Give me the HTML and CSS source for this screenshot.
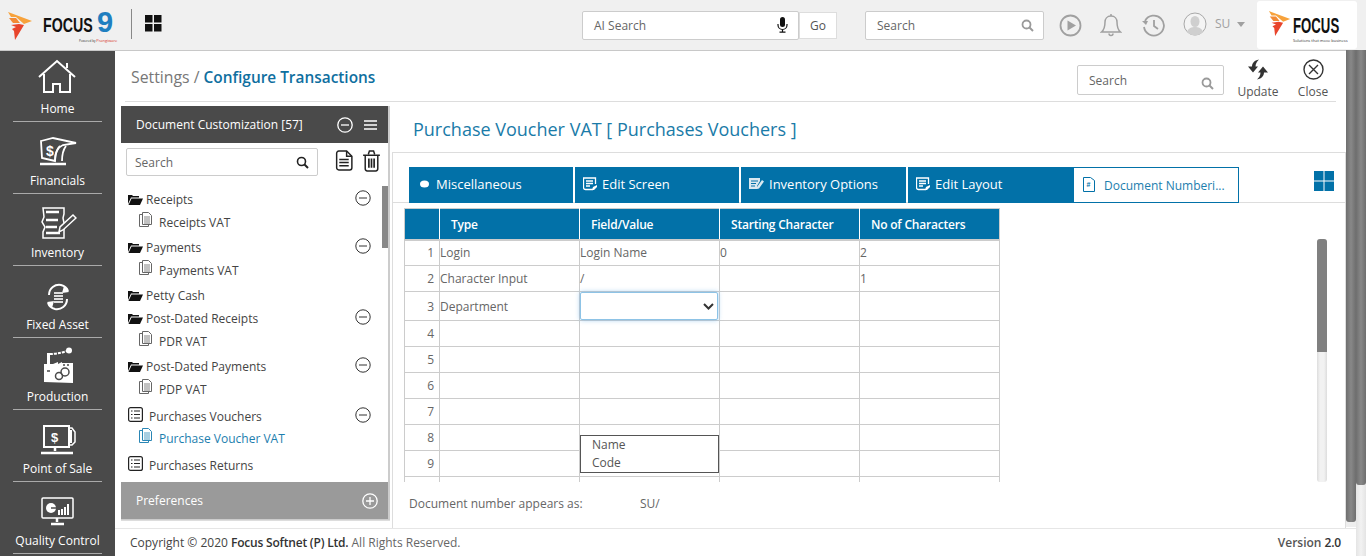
FILE: index.html
```html
<!DOCTYPE html>
<html lang="en">
<head>
    <meta charset="UTF-8">
    <title>Focus 9 - Configure Transactions</title>
    <link rel="stylesheet" href="styles.css">
</head>
<body>

<!-- Top bar -->
<header class="topbar">
    <div class="brand">
        <svg class="brand-mark" width="27" height="29" viewBox="0 0 27 29">
            <polygon points="1,0 25,9 17,12 9,5 4,5" fill="#f7a23b"/>
            <polygon points="2,6 9,6 13,11 6,11" fill="#f28a35"/>
            <polygon points="17,13 8,28 7,19 5,17 9,15 4,13 12,12" fill="#e8452c"/>
        </svg>
        <span class="brand-name">FOCUS</span>
        <span class="brand-nine">9</span>
        <span class="brand-by">Powered by <em>Prangiware</em></span>
    </div>
    <div class="brand-sep"></div>
    <svg class="apps" width="17" height="17" viewBox="0 0 17 17">
        <rect width="7.5" height="7.5"/><rect x="9" width="7.5" height="7.5"/>
        <rect y="9" width="7.5" height="7.5"/><rect x="9" y="9" width="7.5" height="7.5"/>
    </svg>

    <div class="top-tools">
        <div class="field ai-field">
            <span>AI Search</span>
            <svg width="11" height="16" viewBox="0 0 11 16" fill="#111"><rect x="3" y="0" width="5" height="10" rx="2.5"/><path d="M1 7v1a4.500 4.500 0 0 0 9 0V7M5.500 12.500V15M2.500 15.200h6" fill="none" stroke="#111" stroke-width="1.200"/></svg>
        </div>
        <div class="go-btn">Go</div>
        <div class="field top-search">
            <span>Search</span>
            <svg class="lens" width="13" height="13" viewBox="0 0 13 13"><circle cx="5.500" cy="5.500" r="4" fill="none" stroke="#9a9a9a" stroke-width="1.800"/><path d="M8.500 8.500l3.500 3.500" stroke="#9a9a9a" stroke-width="2"/></svg>
        </div>
        <svg class="tool" width="23" height="23" viewBox="0 0 23 23"><circle cx="11.500" cy="11.500" r="10" fill="none" stroke="#a0a0a0" stroke-width="1.800"/><polygon points="8.500,6.500 17,11.500 8.500,16.500" fill="#a0a0a0"/></svg>
        <svg class="tool tool-bell" width="22" height="24" viewBox="0 0 22 24" fill="none" stroke="#a0a0a0" stroke-width="1.500"><path d="M11 3c-4 0-6 3-6 6 0 5-1 8-3.500 10h19C18 17 17 14 17 9c0-3-2-6-6-6z"/><path d="M9 20.500a2 2 0 0 0 4 0M11 1v2"/></svg>
        <svg class="tool tool-history" width="23" height="23" viewBox="0 0 23 23" fill="none" stroke="#a0a0a0" stroke-width="1.800"><path d="M3 7a10 10 0 1 1-1 6"/><polygon points="0,7 6,7 4,11" fill="#a0a0a0" stroke="none"/><path d="M12 6v6l4 3"/></svg>
        <svg class="avatar" width="24" height="24" viewBox="0 0 24 24"><circle cx="12" cy="12" r="11" fill="#f4f4f4" stroke="#a8a8a8"/><ellipse cx="12" cy="9.500" rx="4.500" ry="5.500" fill="#cfcfcf"/><path d="M4 20c1-4 5-5 8-5s7 1 8 5a11 11 0 0 1-16 0z" fill="#cfcfcf"/></svg>
        <span class="user">SU</span>
        <span class="caret"></span>
    </div>

    <div class="partner">
        <svg class="partner-mark" width="24" height="26" viewBox="0 0 27 29">
            <polygon points="1,0 25,9 17,12 9,5 4,5" fill="#f7a23b"/>
            <polygon points="2,6 9,6 13,11 6,11" fill="#f28a35"/>
            <polygon points="17,13 8,28 7,19 5,17 9,15 4,13 12,12" fill="#e8452c"/>
        </svg>
        <div class="partner-text">
            <span class="partner-name">FOCUS</span>
            <span class="partner-tag">Solutions that move business</span>
        </div>
    </div>
</header>

<div class="layout">
    <!-- Left module menu -->
    <nav class="sidebar">
        <a class="nav-item">
            <svg width="40" height="36" viewBox="0 0 40 36" fill="none" stroke="#fff" stroke-width="2"><path d="M1 18L19 2l18 16"/><path d="M29 9V4"/><path d="M6 15v18h9v-8h7v8h10V15"/></svg>
            <span>Home</span>
        </a>
        <a class="nav-item">
            <svg width="38" height="30" viewBox="0 0 38 30" fill="none" stroke="#fff" stroke-width="1.800"><path d="M2 4l12-3 23 5-13 2c-5 2-8 8-8 16L3 21z"/><path d="M21 9c-3 3-5 8-5 15M27 9c-3 4-4 9-4 15"/><path d="M1 27h26" stroke-width="2.500"/><text x="7" y="19" font-family="Liberation Sans" font-weight="700" font-size="14" fill="#fff" stroke="none">$</text></svg>
            <span>Financials</span>
        </a>
        <a class="nav-item">
            <svg width="38" height="32" viewBox="0 0 38 32" fill="none" stroke="#fff" stroke-width="1.500"><path d="M4 1h21v6l-1 4 1 5v15H4v-6l2-5-3-5 2-5z"/><path d="M7 5h13M7 13h12M7 20h11M7 26h14" stroke-width="2.500"/><path d="M20 25l1-5 13-12 3 3-13 12z" fill="#4a4a4a"/></svg>
            <span>Inventory</span>
        </a>
        <a class="nav-item">
            <svg width="24" height="28" viewBox="0 0 24 28" fill="none" stroke="#fff" stroke-width="2"><path d="M3 12C3 5 9 1 15 2c4 1 6 3 7 6"/><polygon points="18,3 23,9 16,10" fill="#fff" stroke="none"/><path d="M21 16c0 7-6 11-12 10-4-1-6-3-7-6"/><polygon points="6,25 1,19 8,18" fill="#fff" stroke="none"/><path d="M8 10h9M8 13h9M8 16h9M8 19h9" stroke="#ddd" stroke-width="2"/></svg>
            <span>Fixed Asset</span>
        </a>
        <a class="nav-item">
            <svg width="30" height="36" viewBox="0 0 30 36" fill="#fff"><path d="M1 35V17h3V6h3v11h3l5-2v2l4-2v1h11v20z"/><path d="M7 7c5 0 11-1 17-3" fill="none" stroke="#fff" stroke-width="2" stroke-dasharray="3 1"/><circle cx="26" cy="3.500" r="3"/><circle cx="16" cy="29" r="3.500" fill="none" stroke="#4a4a4a" stroke-width="1.500"/><circle cx="22" cy="25" r="4" fill="none" stroke="#4a4a4a" stroke-width="1.500"/><path d="M4 24h3M20 18h2M24 18h2" stroke="#4a4a4a" stroke-width="1.500"/></svg>
            <span>Production</span>
        </a>
        <a class="nav-item">
            <svg width="36" height="30" viewBox="0 0 36 30" fill="none" stroke="#fff" stroke-width="2"><rect x="4" y="1" width="25" height="21"/><path d="M29 3h3l3 4v10l-3 3h-3" stroke-width="1.500"/><path d="M30 5h2v13h-2z" fill="#fff" stroke="none"/><path d="M15 22v4M1 28h32" stroke-width="2.500"/><text x="11" y="17" font-family="Liberation Sans" font-weight="700" font-size="13" fill="#fff" stroke="none">$</text></svg>
            <span>Point of Sale</span>
        </a>
        <a class="nav-item">
            <svg width="34" height="30" viewBox="0 0 34 30" fill="none" stroke="#fff" stroke-width="1.500"><rect x="1" y="1" width="31" height="20" rx="1"/><circle cx="10" cy="11" r="5" fill="#fff" stroke="none"/><path d="M10 11h5" stroke="#4a4a4a"/><path d="M18 18v-5M21 18v-6M24 18v-8M27 18V7" stroke-width="2"/><path d="M16 21v4M10 27h13" stroke-width="2.500"/></svg>
            <span>Quality Control</span>
        </a>
    </nav>

    <div class="main">
        <div class="work">
            <div class="content">
                <div class="crumb-row">
                    <h1 class="crumb">Settings / <b>Configure Transactions</b></h1>
                    <div class="field page-search">
                        <span>Search</span>
                        <svg class="lens" width="13" height="13" viewBox="0 0 13 13"><circle cx="5.500" cy="5.500" r="4" fill="none" stroke="#9a9a9a" stroke-width="1.800"/><path d="M8.500 8.500l3.500 3.500" stroke="#9a9a9a" stroke-width="2"/></svg>
                    </div>
                    <a class="action action-update">
                        <svg width="22" height="20" viewBox="0 0 22 20" fill="#333"><path d="M12 0C7 1 5 4 5 7H1l5 6 5-6H8.500C8.500 4 10 2 12 0z"/><path d="M10 20c5-1 7-4 7-7h4l-5-6-5 6h2.500c0 3-1.500 5-3.500 7z"/></svg>
                        <span>Update</span>
                    </a>
                    <a class="action action-close">
                        <svg width="21" height="21" viewBox="0 0 21 21" fill="none" stroke="#333" stroke-width="1.400"><circle cx="10.500" cy="10.500" r="9.500"/><path d="M6 6l9 9M15 6l-9 9"/></svg>
                        <span>Close</span>
                    </a>
                </div>

                <div class="columns">
                    <!-- Document tree -->
                    <aside class="tree-panel">
                        <div class="tree-head">
                            <span>Document Customization [57]</span>
                            <svg width="16" height="16" viewBox="0 0 16 16" fill="none" stroke="#fff" stroke-width="1.300"><circle cx="8" cy="8" r="7.200"/><path d="M4 8h8"/></svg>
                            <svg class="burger" width="13" height="10" viewBox="0 0 13 10" stroke="#fff" stroke-width="1.500"><path d="M0 1h13M0 5h13M0 9h13"/></svg>
                        </div>
                        <div class="tree-tools">
                            <div class="field tree-search">
                                <span>Search</span>
                                <svg class="lens" width="13" height="13" viewBox="0 0 13 13"><circle cx="5.500" cy="5.500" r="4" fill="none" stroke="#222" stroke-width="1.600"/><path d="M8.500 8.500l3.500 3.500" stroke="#222" stroke-width="2"/></svg>
                            </div>
                            <svg width="18" height="21" viewBox="0 0 17 20" fill="none" stroke="#222" stroke-width="1.400"><path d="M1.500 3a2 2 0 0 1 2-2H11l5 5v11a2 2 0 0 1-2 2H3.500a2 2 0 0 1-2-2z"/><path d="M11 1v5h5M4 9h9M4 12h9M4 15h9"/></svg>
                            <svg width="19" height="22" viewBox="0 0 18 21" fill="none" stroke="#222" stroke-width="1.400"><path d="M1 5h16M6 4l1-3h4l1 3"/><path d="M3 5v13a2 2 0 0 0 2 2h8a2 2 0 0 0 2-2V5"/><path d="M6.500 8v9M9 8v9M11.500 8v9" stroke-width="1.600"/></svg>
                        </div>
                        <div class="tree">
                            <div class="tree-scroll"></div>
                            <div class="group"><svg class="folder" width="15" height="11" viewBox="0 0 15 11"><path d="M0 10V1h4l1 1h6v1.500H3L0 10z"/><path d="M3.500 4.500H15L12 11H0.500z"/></svg><span>Receipts</span><svg class="minus" width="16" height="16" viewBox="0 0 16 16"><circle cx="8" cy="8" r="7.200"/><path d="M4 8h8"/></svg></div>
                            <div class="leaf"><svg width="13" height="15" viewBox="0 0 13 15" fill="none" stroke="#666"><path d="M3.500.5h6l3 3v9h-9zM3.500 2.500h-3v12h9v-2"/><path d="M5 5h6M5 7h6M5 9h6M5 11h6" stroke-width=".8"/></svg><span>Receipts VAT</span></div>
                            <div class="group"><svg class="folder" width="15" height="11" viewBox="0 0 15 11"><path d="M0 10V1h4l1 1h6v1.500H3L0 10z"/><path d="M3.500 4.500H15L12 11H0.500z"/></svg><span>Payments</span><svg class="minus" width="16" height="16" viewBox="0 0 16 16"><circle cx="8" cy="8" r="7.200"/><path d="M4 8h8"/></svg></div>
                            <div class="leaf"><svg width="13" height="15" viewBox="0 0 13 15" fill="none" stroke="#666"><path d="M3.500.5h6l3 3v9h-9zM3.500 2.500h-3v12h9v-2"/><path d="M5 5h6M5 7h6M5 9h6M5 11h6" stroke-width=".8"/></svg><span>Payments VAT</span></div>
                            <div class="group group-tight"><svg class="folder" width="15" height="11" viewBox="0 0 15 11"><path d="M0 10V1h4l1 1h6v1.500H3L0 10z"/><path d="M3.500 4.500H15L12 11H0.500z"/></svg><span>Petty Cash</span></div>
                            <div class="group"><svg class="folder" width="15" height="11" viewBox="0 0 15 11"><path d="M0 10V1h4l1 1h6v1.500H3L0 10z"/><path d="M3.500 4.500H15L12 11H0.500z"/></svg><span>Post-Dated Receipts</span><svg class="minus" width="16" height="16" viewBox="0 0 16 16"><circle cx="8" cy="8" r="7.200"/><path d="M4 8h8"/></svg></div>
                            <div class="leaf"><svg width="13" height="15" viewBox="0 0 13 15" fill="none" stroke="#666"><path d="M3.500.5h6l3 3v9h-9zM3.500 2.500h-3v12h9v-2"/><path d="M5 5h6M5 7h6M5 9h6M5 11h6" stroke-width=".8"/></svg><span>PDR VAT</span></div>
                            <div class="group"><svg class="folder" width="15" height="11" viewBox="0 0 15 11"><path d="M0 10V1h4l1 1h6v1.500H3L0 10z"/><path d="M3.500 4.500H15L12 11H0.500z"/></svg><span>Post-Dated Payments</span><svg class="minus" width="16" height="16" viewBox="0 0 16 16"><circle cx="8" cy="8" r="7.200"/><path d="M4 8h8"/></svg></div>
                            <div class="leaf"><svg width="13" height="15" viewBox="0 0 13 15" fill="none" stroke="#666"><path d="M3.500.5h6l3 3v9h-9zM3.500 2.500h-3v12h9v-2"/><path d="M5 5h6M5 7h6M5 9h6M5 11h6" stroke-width=".8"/></svg><span>PDP VAT</span></div>
                            <div class="group group-list"><svg class="list-icon" width="15" height="15" viewBox="0 0 15 15" fill="none" stroke="#222" stroke-width="1.200"><rect x=".6" y=".6" width="13.800" height="13.800" rx="2"/><path d="M3 4h1.500M6 4h6M3 7.500h1.500M6 7.500h6M3 11h1.500M6 11h6"/></svg><span>Purchases Vouchers</span><svg class="minus" width="16" height="16" viewBox="0 0 16 16"><circle cx="8" cy="8" r="7.200"/><path d="M4 8h8"/></svg></div>
                            <div class="leaf leaf-active"><svg width="13" height="15" viewBox="0 0 13 15" fill="none" stroke="#2a86b5"><path d="M3.500.5h6l3 3v9h-9zM3.500 2.500h-3v12h9v-2"/><path d="M5 5h6M5 7h6M5 9h6M5 11h6" stroke-width=".8"/></svg><span>Purchase Voucher VAT</span></div>
                            <div class="group group-list"><svg class="list-icon" width="15" height="15" viewBox="0 0 15 15" fill="none" stroke="#222" stroke-width="1.200"><rect x=".6" y=".6" width="13.800" height="13.800" rx="2"/><path d="M3 4h1.500M6 4h6M3 7.500h1.500M6 7.500h6M3 11h1.500M6 11h6"/></svg><span>Purchases Returns</span></div>
                        </div>
                        <div class="tree-foot">
                            <span>Preferences</span>
                            <svg width="16" height="16" viewBox="0 0 16 16" fill="none" stroke="#fff" stroke-width="1.300"><circle cx="8" cy="8" r="7.200"/><path d="M4 8h8M8 4v8"/></svg>
                        </div>
                    </aside>

                    <!-- Voucher settings -->
                    <section class="pane">
                        <h2 class="pane-title">Purchase Voucher VAT [ Purchases Vouchers ]</h2>
                        <div class="pane-body">
                            <div class="tabs">
                                <div class="tab"><svg width="11" height="8" viewBox="0 0 11 8" fill="#fff"><ellipse cx="5.500" cy="4" rx="4.500" ry="3.500"/></svg>Miscellaneous</div>
                                <div class="tab"><svg width="15" height="14" viewBox="0 0 15 14" fill="none" stroke="#fff" stroke-width="1.300"><path d="M10 12.500H2.500a2 2 0 0 1-2-2V1h12v6"/><path d="M3 4h7M3 6.500h7M3 9h4"/><path d="M9 13l1-3 4-2v2l-3 3z" fill="#fff" stroke="none"/></svg>Edit Screen</div>
                                <div class="tab"><svg width="15" height="12" viewBox="0 0 15 12"><path d="M0 0h11v3l-3 5v3H0z" fill="#d9e8f0"/><path d="M2 3h7M2 5.500h5M2 8h4" stroke="#0271a8"/><path d="M8 9l5-7 2 1.500-5 7L8 11z" fill="#d9e8f0"/></svg>Inventory Options</div>
                                <div class="tab"><svg width="15" height="14" viewBox="0 0 15 14" fill="none" stroke="#fff" stroke-width="1.300"><path d="M10 12.500H2.500a2 2 0 0 1-2-2V1h12v6"/><path d="M3 4h7M3 6.500h7M3 9h4"/><path d="M9 13l1-3 4-2v2l-3 3z" fill="#fff" stroke="none"/></svg>Edit Layout</div>
                                <div class="tab tab-active"><svg width="12" height="15" viewBox="0 0 12 15" fill="none" stroke="#0271a8"><path d="M.5.500h7l4 3v11H.5z"/><text x="3.500" y="10" font-size="7" font-family="Liberation Sans" font-weight="700" fill="#0271a8" stroke="none">#</text></svg><span>Document Numberi...</span></div>
                                <svg class="view-toggle" width="20" height="20" viewBox="0 0 20 20" fill="#0271a8"><rect width="9.500" height="9.500"/><rect x="10.500" width="9.500" height="9.500"/><rect y="10.500" width="9.500" height="9.500"/><rect x="10.500" y="10.500" width="9.500" height="9.500"/></svg>
                            </div>
                            <div class="grid-area">
                                <div class="grid-clip">
                                    <table class="grid">
                                        <thead>
                                            <tr><th></th><th>Type</th><th>Field/Value</th><th>Starting Character</th><th>No of Characters</th></tr>
                                        </thead>
                                        <tbody>
                                            <tr><td class="num">1</td><td>Login</td><td>Login Name</td><td>0</td><td>2</td></tr>
                                            <tr><td class="num">2</td><td>Character Input</td><td>/</td><td></td><td>1</td></tr>
                                            <tr class="row-edit"><td class="num">3</td><td>Department</td><td class="cell-select"><div class="select-box"><svg width="11" height="7" viewBox="0 0 11 7" fill="none" stroke="#333" stroke-width="2"><path d="M1 1l4.500 4.500L10 1"/></svg></div></td><td></td><td></td></tr>
                                            <tr><td class="num">4</td><td></td><td></td><td></td><td></td></tr>
                                            <tr><td class="num">5</td><td></td><td></td><td></td><td></td></tr>
                                            <tr><td class="num">6</td><td></td><td></td><td></td><td></td></tr>
                                            <tr><td class="num">7</td><td></td><td></td><td></td><td></td></tr>
                                            <tr><td class="num">8</td><td></td><td></td><td></td><td></td></tr>
                                            <tr><td class="num">9</td><td></td><td></td><td></td><td></td></tr>
                                            <tr><td class="num"></td><td></td><td></td><td></td><td></td></tr>
                                        </tbody>
                                    </table>
                                    <div class="drop-list">
                                        <div>Name</div>
                                        <div>Code</div>
                                    </div>
                                </div>
                                <div class="grid-scroll"><div class="grid-thumb"></div></div>
                            </div>
                            <div class="doc-number">
                                <span class="doc-label">Document number appears as:</span>
                                <span>SU/</span>
                            </div>
                        </div>
                    </section>
                </div>
            </div>
            <div class="page-scroll"><div class="thumb-a"></div></div>
        </div>
        <footer class="footer">
            <span>Copyright © 2020 <b>Focus Softnet (P) Ltd.</b> <i>All Rights Reserved.</i></span>
            <span class="version">Version <b>2.0</b></span>
        </footer>
        <div class="outer-scroll"><div class="thumb-b"></div></div>
    </div>
</div>

</body>
</html>
```

FILE: styles.css
```css
* {
    box-sizing: border-box;
}
html, body {
    margin: 0;
    height: 100%;
    overflow: hidden;
}
body {
    font-family: "Open Sans", sans-serif;
    font-size: 12px;
    color: #555;
    background-color: #fff;
}
h1, h2 {
    margin: 0;
    font-weight: 400;
}

/* top bar */
.topbar {
    height: 51px;
    display: flex;
    align-items: flex-start;
    background-color: #f0f0f0;
    border-bottom: 1px solid #c8c8c8;
}
.brand {
    width: 131px;
    height: 50px;
    display: flex;
    align-items: center;
    padding-left: 7px;
    position: relative;
}
.brand-mark {
    flex: none;
    margin-top: 3px;
}
.brand-name {
    font-family: "Liberation Sans", sans-serif;
    font-weight: 700;
    font-size: 20px;
    color: #111;
    margin-left: 9px;
    width: 54px;
    transform: scaleX(0.71);
    transform-origin: left center;
}
.brand-nine {
    font-family: "Liberation Sans", sans-serif;
    font-weight: 700;
    font-size: 29px;
    line-height: 24px;
    color: #1f7fc0;
    margin: -6px 0 0 0;
}
.brand-by {
    position: absolute;
    left: 79px;
    top: 39px;
    font-size: 3px;
    line-height: 4px;
    color: #333;
    white-space: nowrap;
}
.brand-by em {
    font-style: normal;
    color: #d8352a;
    font-size: 4px;
}
.brand-sep {
    width: 1px;
    height: 30px;
    margin-top: 9px;
    background-color: #888;
}
.apps {
    margin: 15px 0 0 13px;
    fill: #111;
}
.top-tools {
    display: flex;
    align-items: center;
    height: 50px;
    margin-left: 420px;
}
.field {
    display: flex;
    align-items: center;
    justify-content: space-between;
    background-color: #fff;
    border: 1px solid #ccc;
    border-radius: 2px;
    font-size: 12px;
    color: #666;
}
.ai-field {
    width: 217px;
    height: 29px;
    padding: 0 10px 0 11px;
}
.go-btn {
    width: 38px;
    height: 27px;
    line-height: 25px;
    text-align: center;
    background-color: #fff;
    border: 1px solid #ddd;
    margin-right: 28px;
    color: #555;
}
.top-search {
    width: 179px;
    height: 29px;
    padding: 0 9px 0 11px;
}
.tool {
    flex: none;
    margin-left: 15px;
}
.tool-bell {
    margin-left: 18px;
}
.tool-history {
    margin-left: 20px;
}
.avatar {
    flex: none;
    margin-left: 18px;
    margin-top: -2px;
}
.user {
    margin: -4px 0 0 8px;
    color: #a0a0a0;
}
.caret {
    width: 0;
    height: 0;
    margin: -2px 0 0 7px;
    border: 4px solid transparent;
    border-top: 5px solid #a0a0a0;
    border-bottom: 0;
}
.partner {
    width: 100px;
    height: 48px;
    margin: 1px 9px 0 auto;
    display: flex;
    padding: 10px 0 0 11px;
    background-color: #fff;
    border-radius: 3px;
}
.partner-mark {
    flex: none;
}
.partner-text {
    width: 50px;
    flex: none;
    display: flex;
    flex-direction: column;
    margin-left: 1px;
}
.partner-name {
    font-family: "Liberation Sans", sans-serif;
    font-weight: 700;
    font-size: 22px;
    line-height: 24px;
    margin-top: 3px;
    color: #111;
    transform: scaleX(0.6);
    transform-origin: left center;
}
.partner-tag {
    font-size: 4px;
    line-height: 5px;
    color: #333;
    white-space: nowrap;
}

.layout {
    height: 505px;
    display: flex;
}

/* left module menu */
.sidebar {
    width: 115px;
    flex: none;
    background-color: #4a4a4a;
}
.nav-item {
    height: 72px;
    margin: 0 13px;
    display: flex;
    flex-direction: column;
    align-items: center;
    justify-content: flex-end;
    border-bottom: 1px solid #aaa;
    color: #fff;
    white-space: nowrap;
    padding-bottom: 4px;
}
.nav-item:first-child {
    height: 71px;
}
.nav-item svg {
    margin-bottom: 6px;
}
.nav-item span {
    line-height: 16px;
    font-size: 12px;
}

.main {
    flex: 1;
    min-width: 0;
    position: relative;
    display: flex;
    flex-direction: column;
}
.work {
    height: 477px;
    display: flex;
}
.content {
    width: 1231px;
    padding-left: 6px;
}
.crumb-row {
    height: 51px;
    margin: 0 10px 0 4px;
    display: flex;
    align-items: flex-start;
    border-bottom: 1px solid #ddd;
}
.crumb {
    flex: 1;
    font-size: 15.8px;
    line-height: 22px;
    margin: 15px 0 0 6px;
    color: #777;
}
.crumb b {
    font-weight: 600;
    font-size: 15.4px;
    color: #0f6f9f;
}
.page-search {
    width: 147px;
    height: 30px;
    margin: 14px 8px 0 0;
    padding: 0 9px 0 11px;
}
.page-search .lens {
    margin-top: 6px;
}
.action {
    width: 52px;
    display: flex;
    flex-direction: column;
    align-items: center;
    padding-top: 8px;
    color: #555;
    line-height: 16px;
}
.action svg {
    height: 21px;
}
.action-update {
    margin-right: 3px;
}
.action-close {
    margin-right: -3px;
}
.action span {
    margin-top: 4px;
}

.columns {
    display: flex;
    height: 426px;
}

/* document tree */
.tree-panel {
    width: 269px;
    flex: none;
    margin-top: 4px;
    height: 414px;
    display: flex;
    flex-direction: column;
    border-right: 2px solid #ccc;
    box-shadow: 0 1px 0 #ddd;
}
.tree-head {
    height: 37px;
    flex: none;
    display: flex;
    align-items: center;
    padding: 0 11px 0 15px;
    background-color: #4a4a4a;
    color: #fff;
}
.tree-head span {
    flex: 1;
}
.burger {
    margin-left: 11px;
}
.tree-tools {
    flex: none;
    display: flex;
    align-items: flex-start;
    padding: 5px 0 0 5px;
    height: 44px;
}
.tree-search {
    width: 192px;
    height: 28px;
    padding: 0 8px;
    margin-right: 17px;
}
.tree-tools > svg {
    margin: 2px 9px 0 0;
}
.tree-tools > svg + svg {
    margin-right: 0;
}
.tree {
    flex: 1;
    min-height: 0;
    position: relative;
    color: #444;
}
.tree-scroll {
    position: absolute;
    right: 0;
    top: -1px;
    width: 6px;
    height: 62px;
    background-color: #888;
}
.group {
    display: flex;
    align-items: center;
    height: 22px;
    padding-left: 7px;
    margin-top: 1px;
    position: relative;
}
.group span {
    flex: 1;
    margin-left: 3px;
}
.folder {
    fill: #111;
    flex: none;
}
.minus {
    flex: none;
    margin-right: 17px;
    margin-top: -2px;
    fill: none;
    stroke: #333;
    stroke-width: 1;
}
.group-tight {
    margin-top: 4px;
}
.group-list {
    margin-top: 6px;
}
.group-list span {
    margin-left: 6px;
}
.list-icon {
    flex: none;
    margin-top: -3px;
}
.leaf {
    display: flex;
    align-items: center;
    height: 22px;
    padding-left: 18px;
    margin-bottom: 4px;
}
.leaf span {
    margin-left: 7px;
    padding-top: 2px;
}
.leaf svg {
    margin-top: -3px;
}
.leaf-active {
    color: #1c7eae;
    margin-top: -1px;
    margin-bottom: 2px;
}
.tree-foot {
    flex: none;
    height: 38px;
    display: flex;
    align-items: center;
    justify-content: space-between;
    padding: 0 10px 0 15px;
    background-color: #9a9a9a;
    color: #fff;
    border-bottom: 1px solid #ccc;
}

/* voucher settings */
.pane {
    flex: 1;
    min-width: 0;
    margin-left: 2px;
}
.pane-title {
    height: 50px;
    padding: 15px 0 0 21px;
    font-size: 18px;
    line-height: 24px;
    color: #1a7ba8;
}
.pane-body {
    height: 376px;
    border-top: 1px solid #ddd;
    border-left: 1px solid #ddd;
    border-right: 1px solid #ddd;
}
.tabs {
    height: 50px;
    display: flex;
    align-items: flex-end;
    gap: 2px;
    padding: 0 0 0 16px;
    border-bottom: 1px solid #ddd;
    position: relative;
}
.tab {
    width: 164px;
    height: 35px;
    display: flex;
    align-items: center;
    gap: 4px;
    padding: 0 0 1px 8px;
    background-color: #0271a8;
    border-bottom: 1px solid #0271a8;
    color: #fff;
    font-size: 13px;
    box-shadow: 0 1px 0 #0271a8;
}
.tab:nth-child(1) {
    gap: 6px;
    padding-left: 10px;
}
.tab:nth-child(3), .tab:nth-child(4) {
    width: 165px;
}
.tab:nth-child(3) {
    gap: 5px;
}
.tab-active {
    width: 166px;
    height: 36px;
    margin-left: -2px;
    margin-bottom: -1px;
    padding-left: 9px;
    gap: 9px;
    background-color: #fff;
    border: 1px solid #0271a8;
    box-shadow: none;
    color: #1c7eae;
    font-size: 12px;
}
.tab-active span {
    padding-top: 2px;
}
.view-toggle {
    position: absolute;
    right: 11px;
    bottom: 11px;
}
.grid-area {
    display: flex;
    padding: 5px 0 0 11px;
    height: 280px;
}
.grid-clip {
    width: 596px;
    height: 274px;
    overflow: hidden;
    position: relative;
    flex: none;
}
.grid {
    width: 596px;
    table-layout: fixed;
    border-collapse: collapse;
}
.grid th, .grid td {
    border: 1px solid #ccc;
    padding: 0;
}
.grid th {
    height: 31px;
    background-color: #0271a8;
    border-color: #ccc #fff #ccc #ccc;
    border-bottom-width: 2px;
    color: #fff;
    font-weight: 600;
    font-size: 12px;
    letter-spacing: -0.2px;
    text-align: left;
    padding: 1px 0 0 11px;
}
.grid th:first-child {
    width: 35px;
    padding: 0;
}
.grid th:last-child {
    border-right-color: #ccc;
}
.grid td {
    height: 26px;
    color: #666;
}
.grid .num {
    text-align: right;
    padding-right: 5px;
    color: #666;
}
.row-edit td {
    height: 29px;
}
.grid .cell-select {
    position: relative;
}
.select-box {
    position: absolute;
    left: 0;
    top: 0;
    width: 138px;
    height: 28px;
    background-color: #fff;
    border: 1px solid #8dc3e6;
    border-radius: 2px;
    box-shadow: 0 0 5px rgba(102, 175, 233, 0.6);
    display: flex;
    align-items: center;
    justify-content: flex-end;
    padding-right: 3px;
}
.drop-list {
    position: absolute;
    left: 176px;
    top: 227px;
    width: 139px;
    height: 38px;
    padding: 0 0 0 11px;
    background-color: #fff;
    border: 1px solid #555;
    line-height: 18px;
    color: #555;
}
.grid-scroll {
    position: absolute;
    left: 1202px;
    top: 188px;
    width: 10px;
    height: 243px;
    background: linear-gradient(90deg, #ddd, #f2f2f2 30%, #f2f2f2 70%, #ddd);
    border-radius: 3px;
    overflow: hidden;
}
.grid-thumb {
    height: 113px;
    background-color: #808080;
}
.doc-number {
    display: flex;
    padding: 12px 0 0 16px;
    color: #666;
}
.doc-label {
    width: 231px;
}

/* footer */
.footer {
    height: 28px;
    flex: none;
    display: flex;
    align-items: center;
    justify-content: space-between;
    padding: 0 25px 0 15px;
    border-top: 1px solid #e6e6e6;
    color: #444;
    position: relative;
}
.footer b {
    font-weight: 600;
    letter-spacing: -0.2px;
    color: #333;
}
.footer i {
    font-style: normal;
    color: #666;
}
.version {
    color: #555;
    font-weight: 600;
}

/* page scrollbars */
.page-scroll {
    width: 10px;
    flex: none;
    margin-top: -1px;
    height: 477px;
    background: #eee;
}
.thumb-a {
    height: 472px;
    background: linear-gradient(90deg, #6e6e6e, #888 50%, #6e6e6e);
    border-radius: 0 0 3px 3px;
}
.outer-scroll {
    position: absolute;
    right: 0;
    top: -1px;
    bottom: 0;
    width: 10px;
    background: linear-gradient(90deg, #e4e4e4, #f2f2f2 50%, #e4e4e4);
}
.thumb-b {
    height: 435px;
    background: linear-gradient(90deg, #6e6e6e, #888 50%, #6e6e6e);
    border-radius: 0 0 3px 3px;
}
```
